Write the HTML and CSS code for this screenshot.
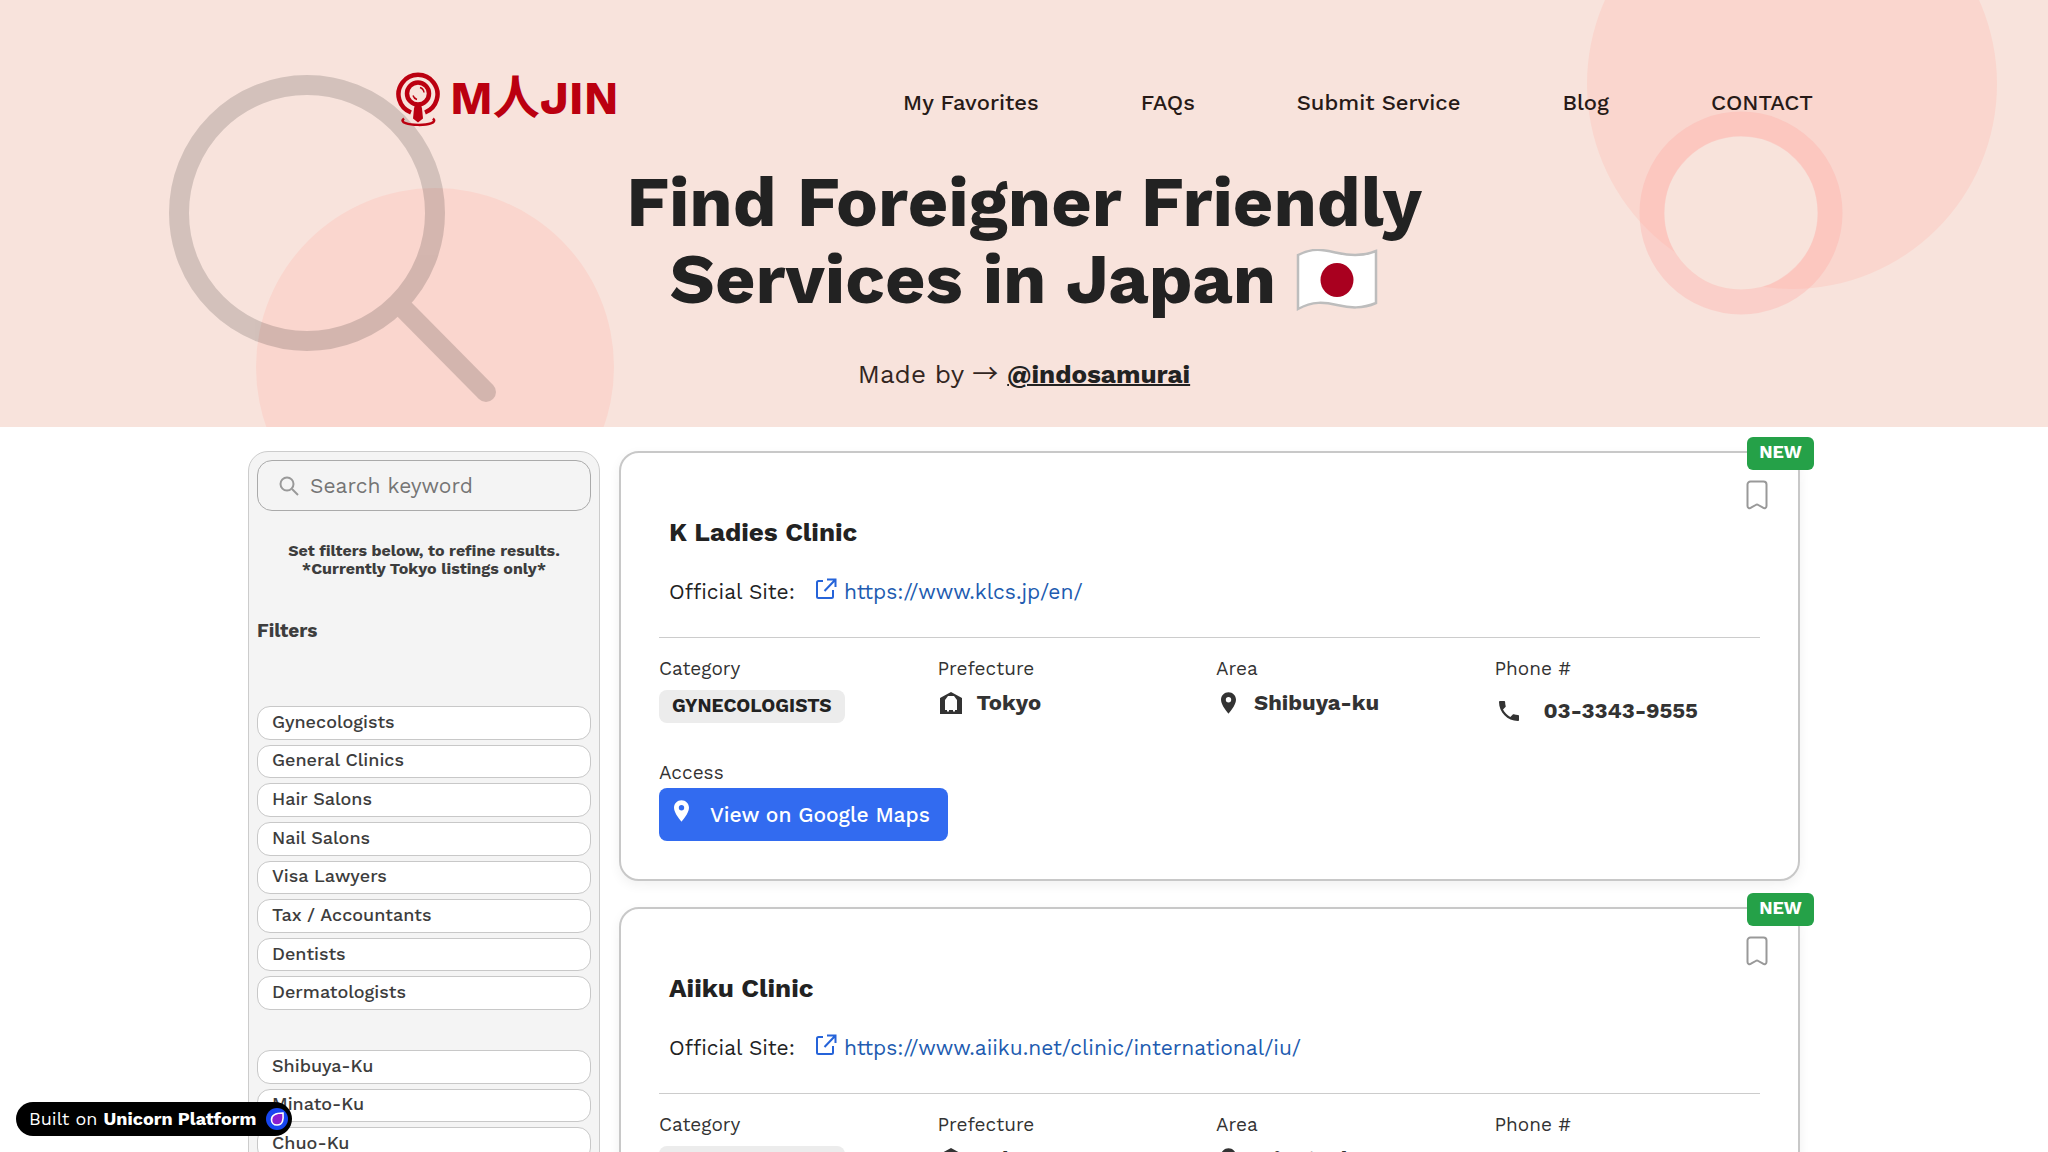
FILE: index.html
```html
<!DOCTYPE html>
<html lang="en">
<head>
<meta charset="utf-8">
<meta name="viewport" content="width=device-width, initial-scale=1">
<title>Find Foreigner Friendly Services in Japan</title>
<link rel="stylesheet" href="styles.css">
</head>
<body>
<svg class="sprite" aria-hidden="true">
  <symbol id="i-pin" viewBox="5 2 14 20"><path fill-rule="evenodd" d="M12 2C8.100 2 5 5.100 5 9c0 5.300 7 13 7 13s7-7.700 7-13c0-3.900-3.100-7-7-7zm0 9.500a2.500 2.500 0 1 1 0-5 2.500 2.500 0 0 1 0 5z"/></symbol>
  <symbol id="i-phone" viewBox="3 3 18 18"><path d="M20 15.500c-1.200 0-2.500-.2-3.600-.6-.3-.1-.7 0-1 .2l-2.200 2.200c-2.800-1.400-5.100-3.800-6.600-6.600l2.200-2.200c.3-.3.4-.7.2-1C8.700 6.400 8.500 5.200 8.500 4c0-.6-.4-1-1-1H4c-.6 0-1 .4-1 1 0 9.400 7.600 17 17 17 .6 0 1-.4 1-1v-3.500c0-.6-.4-1-1-1z"/></symbol>
  <symbol id="i-home" viewBox="0 0 22 22"><path fill-rule="evenodd" d="M11 0 22 6v16H0V6zM5 8v10h2v1.500h2V18h4v1.500h2V18h2V8l-3-4H8z"/></symbol>
  <symbol id="i-mark" viewBox="0 0 22 30"><path d="M4.500 1.500h13a3 3 0 0 1 3 3v21.500c0 2-2 2.800-3.500 1.700L12.300 25a2 2 0 0 0-2.600 0L5 27.700C3.500 28.800 1.500 28 1.500 26V4.500a3 3 0 0 1 3-3z" fill="none" stroke="currentColor" stroke-width="2"/></symbol>
  <symbol id="i-open" viewBox="0 0 22 22"><path d="M8 3H3.500A1.500 1.500 0 0 0 2 4.500v14A1.500 1.500 0 0 0 3.500 20h13a1.500 1.500 0 0 0 1.500-1.500V12M12 1.500h8.500V9M20 2 9.500 13" fill="none" stroke="currentColor" stroke-width="2"/></symbol>
</svg>

<header class="hero">
  <svg class="decor decor-left" viewBox="0 0 620 427" aria-hidden="true">
    <circle cx="435" cy="367" r="179" fill="#fad6ce"/>
    <g opacity=".15" fill="none" stroke="#000" stroke-width="20">
      <circle cx="307" cy="213" r="128"/>
      <path d="M399 304l87 88" stroke-linecap="round"/>
    </g>
  </svg>
  <svg class="decor decor-right" viewBox="0 0 488 427" aria-hidden="true">
    <circle cx="232" cy="84" r="205" fill="#fad6ce"/>
    <circle cx="181" cy="213" r="77" fill="#f8e3db"/>
    <circle cx="181" cy="213" r="89" fill="none" stroke="#ffa9a5" stroke-opacity=".34" stroke-width="25"/>
  </svg>
  <div class="topbar">
    <a class="logo" href="#" aria-label="M人JIN home">
      <svg class="logo-icon" viewBox="0 0 44 56" aria-hidden="true">
        <g fill="none" stroke="#bb0010">
          <path d="M15 41a19.500 19.500 0 1 1 14 0" stroke-width="4.500"/>
          <circle cx="22" cy="22" r="11" stroke-width="4.500"/>
          <path d="M17 24a6 6 0 0 0 4 4M24 16a6 6 0 0 1 4 5" stroke-width="1.500"/>
          <path d="M8 47c-10 8 38 9 29 0" stroke-width="2.500"/>
        </g>
        <path d="M19 33h6l1 4 1 10-5 4-5-4 1-10z" fill="#bb0010"/>
      </svg>
      <span class="logo-text">M人JIN</span>
    </a>
    <nav class="nav">
      <a href="#">My Favorites</a>
      <a href="#">FAQs</a>
      <a href="#">Submit Service</a>
      <a href="#">Blog</a>
      <a href="#">CONTACT</a>
    </nav>
  </div>
  <h1 class="headline">Find Foreigner Friendly<br>Services in Japan
    <svg class="flag" viewBox="0 0 82 62" role="img" aria-label="Flag of Japan"><path d="M2 6C18-2 28 1 42 4s26 3 38-2v52c-14 6-26 5-39 2S17 52 2 60z" fill="#fff" stroke="#bdbdbd" stroke-width="2.500"/><ellipse cx="41" cy="31" rx="16.500" ry="17" fill="#a9001f"/></svg></h1>
  <p class="byline">Made by <span class="arrow">→</span> <a href="#">@indosamurai</a></p>
</header>

<div class="layout">
  <aside class="sidebar">
    <label class="search">
      <svg viewBox="0 0 20 20" aria-hidden="true"><circle cx="8" cy="8" r="6.500"/><path d="M13 13l6 6"/></svg>
      <input type="search" placeholder="Search keyword" aria-label="Search keyword">
    </label>
    <p class="note">Set filters below, to refine results.<br>*Currently Tokyo listings only*</p>
    <h2 class="filters-title">Filters</h2>
    <div class="filters filters-category">
      <button type="button">Gynecologists</button>
      <button type="button">General Clinics</button>
      <button type="button">Hair Salons</button>
      <button type="button">Nail Salons</button>
      <button type="button">Visa Lawyers</button>
      <button type="button">Tax / Accountants</button>
      <button type="button">Dentists</button>
      <button type="button">Dermatologists</button>
    </div>
    <div class="filters filters-area">
      <button type="button">Shibuya-Ku</button>
      <button type="button">Minato-Ku</button>
      <button type="button">Chuo-Ku</button>
    </div>
  </aside>

  <main class="results">
    <article class="card">
      <span class="new">NEW</span>
      <button class="save" type="button" aria-label="Save K Ladies Clinic"><svg><use href="#i-mark"/></svg></button>
      <h3 class="title">K Ladies Clinic</h3>
      <p class="site">Official Site: <a href="#"><svg><use href="#i-open"/></svg>https://www.klcs.jp/en/</a></p>
      <dl class="facts">
        <div><dt>Category</dt><dd class="tag">GYNECOLOGISTS</dd></div>
        <div><dt>Prefecture</dt><dd class="value"><svg class="home"><use href="#i-home"/></svg>Tokyo</dd></div>
        <div><dt>Area</dt><dd class="value"><svg class="pin"><use href="#i-pin"/></svg>Shibuya-ku</dd></div>
        <div><dt>Phone #</dt><dd class="value phone"><svg class="tel"><use href="#i-phone"/></svg>03-3343-9555</dd></div>
        <div class="access"><dt>Access</dt><dd><a class="maps" href="#"><svg><use href="#i-pin"/></svg>View on Google Maps</a></dd></div>
      </dl>
    </article>
    <article class="card">
      <span class="new">NEW</span>
      <button class="save" type="button" aria-label="Save Aiiku Clinic"><svg><use href="#i-mark"/></svg></button>
      <h3 class="title">Aiiku Clinic</h3>
      <p class="site">Official Site: <a href="#"><svg><use href="#i-open"/></svg>https://www.aiiku.net/clinic/international/iu/</a></p>
      <dl class="facts">
        <div><dt>Category</dt><dd class="tag">GYNECOLOGISTS</dd></div>
        <div><dt>Prefecture</dt><dd class="value"><svg class="home"><use href="#i-home"/></svg>Tokyo</dd></div>
        <div><dt>Area</dt><dd class="value"><svg class="pin"><use href="#i-pin"/></svg>Minato-ku</dd></div>
        <div><dt>Phone #</dt></div>
        <div class="access"><dt>Access</dt><dd><a class="maps" href="#"><svg><use href="#i-pin"/></svg>View on Google Maps</a></dd></div>
      </dl>
    </article>
  </main>
</div>

<a class="built" href="#">
  <span>Built on <strong>Unicorn Platform</strong></span>
  <svg viewBox="0 0 22 22" aria-hidden="true"><circle cx="11" cy="11" r="11" fill="#1746f0"/><path d="M17 5c.5 6 .2 12-6 12-3.500 0-5.500-2.500-5.500-5.300C5.500 6.500 10 5 17 5z" fill="#8a1fd0" stroke="#fff" stroke-width="1.600"/></svg>
</a>
</body>
</html>
```
FILE: styles.css
```css
* { box-sizing: border-box; }
body {
  margin: 0;
  background: #fff;
  color: #222;
  font-family: "Work Sans", Inter, "Noto Sans", "Noto Sans CJK JP", sans-serif;
}
h1, h2, h3, p, dl, dd { margin: 0; }
a { color: inherit; text-decoration: none; }
button, input { font: inherit; color: inherit; }
.sprite { position: absolute; width: 0; height: 0; }

/* Hero */
.hero {
  position: relative;
  overflow: hidden;
  padding: 71px 235px 37px;
  background: #f8e3dc;
  text-align: center;
}
.decor { position: absolute; top: 0; height: 427px; }
.decor-left { left: 0; width: 620px; }
.decor-right { right: 0; width: 488px; }
.topbar {
  position: relative;
  display: flex;
  justify-content: space-between;
  align-items: center;
  padding-left: 161px;
}
.logo { display: flex; align-items: center; gap: 10px; color: #bb0010; }
.logo-icon { width: 44px; height: 57px; }
.logo-text { padding-bottom: 4px; font-size: 47px; line-height: 48px; font-weight: 700; }
.nav { display: flex; gap: 102px; margin-top: 6px; font-size: 22px; line-height: 28px; font-weight: 500; color: #271a17; }
.headline {
  position: relative;
  margin-top: 36px;
  font-size: 70px;
  line-height: 77px;
  font-weight: 700;
}
.flag { width: 82px; height: 62px; vertical-align: -8px; }
.byline { position: relative; margin-top: 40px; font-size: 26px; line-height: 32px; color: #33261f; }
.byline a { color: #222; font-weight: 700; text-decoration: underline; text-decoration-thickness: 2px; }
.arrow { font-family: "Noto Sans CJK JP", sans-serif; line-height: 1; }

/* Page columns */
.layout {
  display: flex;
  gap: 19px;
  max-width: 1552px;
  margin: 0 auto;
  padding: 24px 0;
}
.sidebar {
  flex: 0 0 352px;
  min-width: 0;
  padding: 8px;
  border: 1px solid #ccc;
  border-radius: 20px;
  background: #f4f4f4;
  color: #3d3d3d;
}
.search {
  display: flex;
  align-items: center;
  gap: 11px;
  height: 51px;
  padding: 0 21px;
  border: 1px solid #aaa;
  border-radius: 15px;
}
.search svg { flex: none; width: 20px; height: 20px; fill: none; stroke: #999; stroke-width: 2; }
.search input { flex: 1; min-width: 0; padding: 0; border: 0; outline: 0; background: none; font-size: 21px; line-height: 28px; }
.search input::placeholder { color: #757575; opacity: 1; }
.note { margin-top: 31px; font-size: 16px; line-height: 18px; font-weight: 700; text-align: center; }
.filters-title { margin-top: 41px; font-size: 19px; line-height: 24px; font-weight: 700; }
.filters { display: grid; grid-auto-rows: 1fr; gap: 5px; }
.filters-category { margin-top: 63px; min-height: 304px; }
.filters-area { margin-top: 40px; min-height: 111px; }
.filters button {
  padding: 0 14px 2px;
  border: 1px solid #c8c8c8;
  border-radius: 13px;
  background: #fff;
  font-size: 18px;
  line-height: 22px;
  font-weight: 500;
  text-align: left;
}

/* Listing cards */
.results { flex: 1; min-width: 0; display: flex; flex-direction: column; gap: 26px; }
.card {
  position: relative;
  padding: 64px 38px 38px;
  border: 2px solid #c8c8c8;
  border-radius: 20px;
  background: #fff;
  box-shadow: 0 4px 12px rgba(0, 0, 0, .06);
}
.new {
  position: absolute;
  top: -16px;
  right: -16px;
  width: 67px;
  padding: 5px 0 8px;
  border-radius: 6px;
  background: #25a148;
  color: #fff;
  font-size: 18px;
  line-height: 20px;
  font-weight: 700;
  text-align: center;
}
.save { position: absolute; top: 27px; right: 30px; padding: 0; border: 0; background: none; color: #999; }
.save svg { display: block; width: 22px; height: 30px; }
.title { margin-left: 10px; font-size: 26px; line-height: 30px; font-weight: 700; }
.site { display: flex; gap: 20px; margin: 31px 0 31px 10px; font-size: 21px; line-height: 28px; }
.site a { display: flex; gap: 7px; color: #215bb0; }
.site svg { width: 22px; height: 22px; color: #2563d9; }
.facts {
  display: grid;
  grid-template-columns: repeat(4, 1fr);
  gap: 36px 13px;
  padding-top: 19px;
  border-top: 1px solid #ccc;
  color: #333;
}
.facts dt { font-size: 19px; line-height: 24px; }
.facts svg { fill: currentColor; }
.tag {
  width: max-content;
  margin-top: 9px;
  padding: 4px 13px 5px;
  border-radius: 8px;
  background: #ececec;
  color: #222;
  font-size: 19px;
  line-height: 24px;
  font-weight: 700;
}
.value { display: flex; align-items: center; margin-top: 8px; font-size: 22px; line-height: 28px; font-weight: 700; }
.home { width: 22px; height: 22px; margin: 0 15px 0 2px; }
.pin { width: 15px; height: 22px; margin: 0 18px 0 5px; }
.tel { width: 20px; height: 20px; margin: 0 25px 0 4px; }
.phone { margin-top: 16px; }
.access { grid-column: 1 / -1; }
.maps {
  display: flex;
  width: max-content;
  margin-top: 3px;
  padding: 12px 18px 11px 15px;
  border-radius: 8px;
  background: #326bf0;
  color: #fff;
  font-size: 21px;
  line-height: 30px;
  font-weight: 500;
}
.maps svg { width: 15px; height: 22px; margin-right: 21px; }

/* Floating credit */
.built {
  position: fixed;
  left: 16px;
  bottom: 16px;
  display: flex;
  align-items: center;
  gap: 10px;
  height: 34px;
  padding: 0 4px 0 13px;
  border-radius: 17px;
  background: #000;
  color: #fff;
  font-size: 18px;
  line-height: 22px;
}
.built svg { width: 22px; height: 22px; }
```
